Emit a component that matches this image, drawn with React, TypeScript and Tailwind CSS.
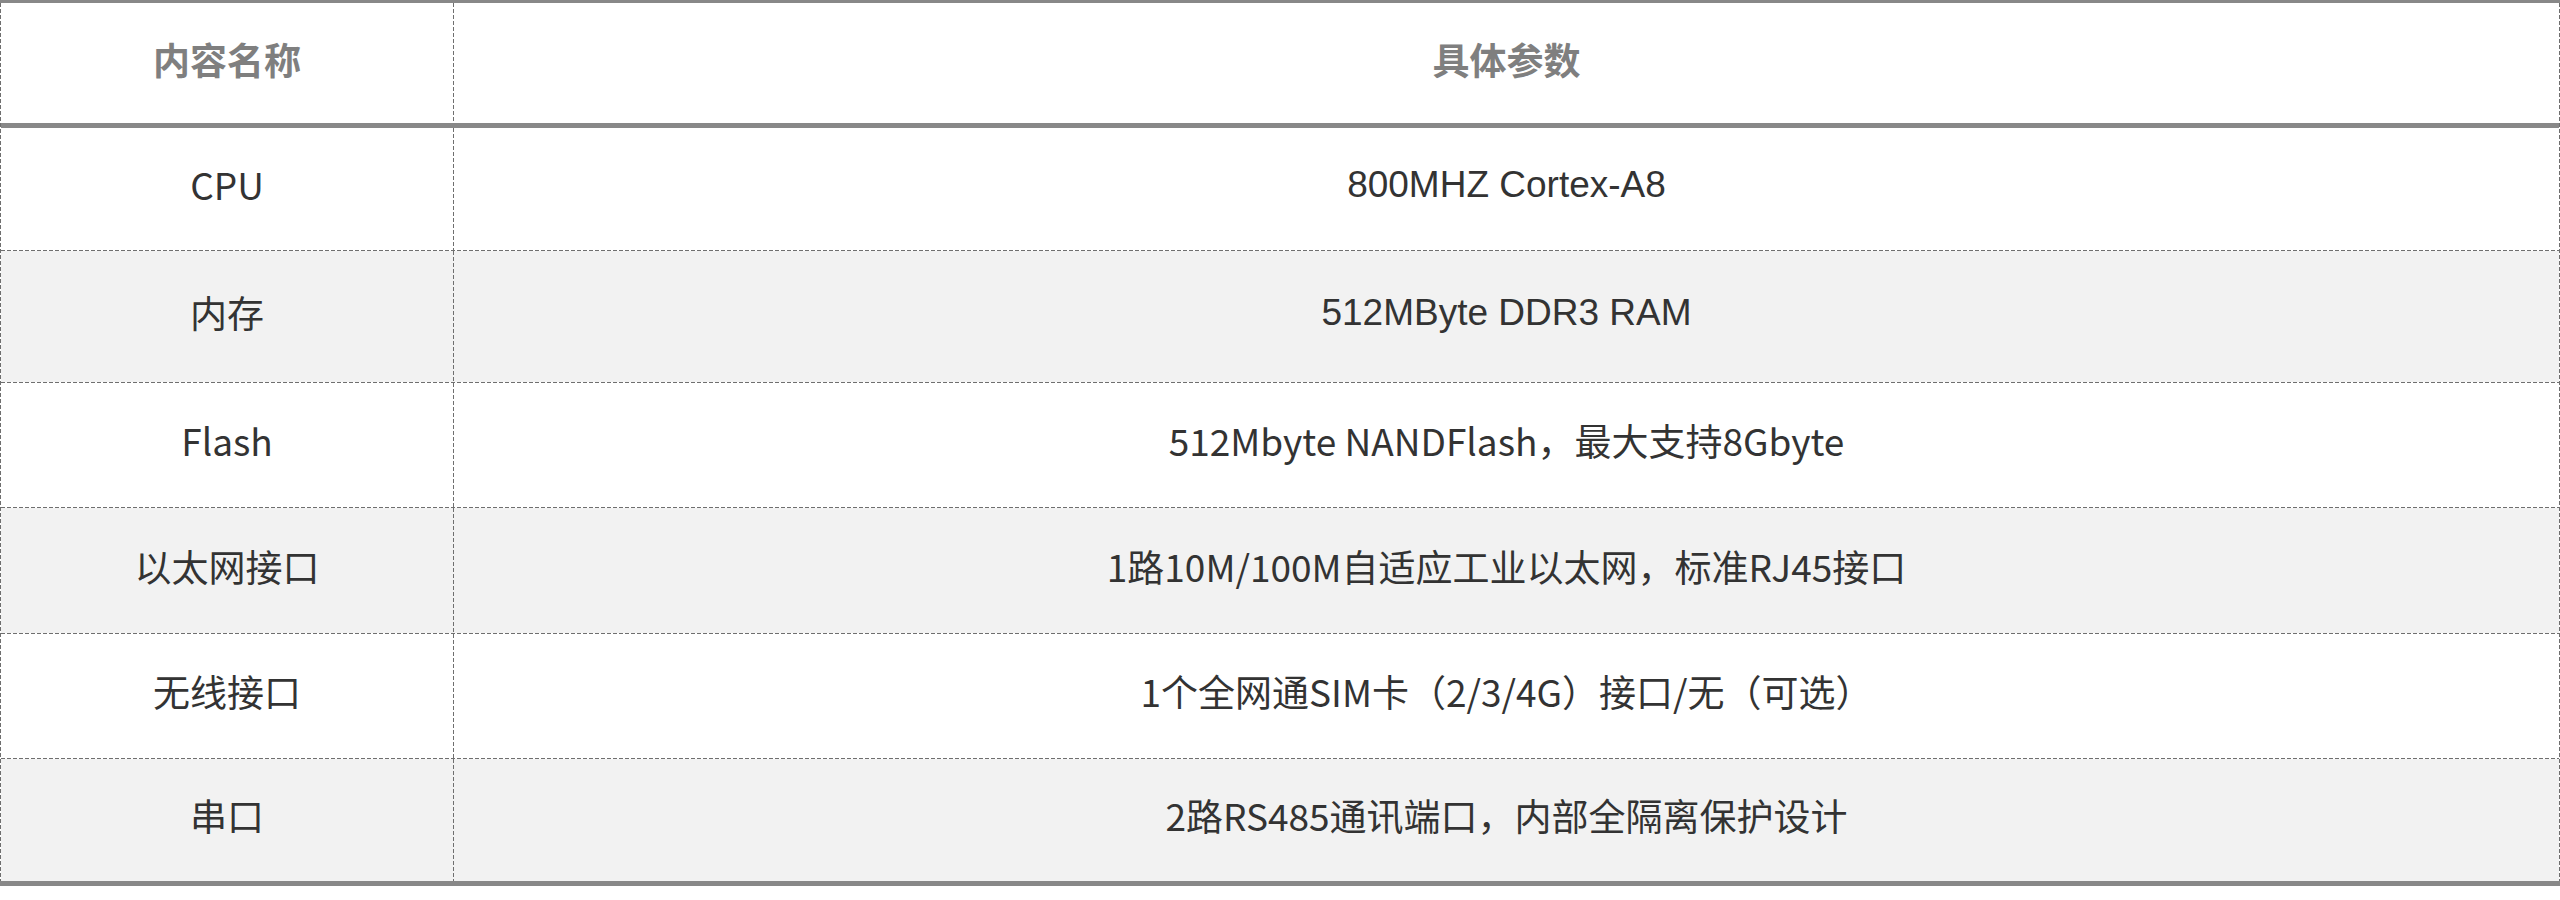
import React from 'react';

interface SpecRow {
  name: string;
  value: string;
  h: string;
  latin?: boolean;
}

const rows: SpecRow[] = [
  { name: 'CPU', value: '800MHZ Cortex-A8', h: 'h-[122px]', latin: true },
  { name: '内存', value: '512MByte DDR3 RAM', h: 'h-[131px]', latin: true },
  { name: 'Flash', value: '512Mbyte NANDFlash，最大支持8Gbyte', h: 'h-[124px]' },
  { name: '以太网接口', value: '1路10M/100M自适应工业以太网，标准RJ45接口', h: 'h-[125px]' },
  { name: '无线接口', value: '1个全网通SIM卡（2/3/4G）接口/无（可选）', h: 'h-[124px]' },
  { name: '串口', value: '2路RS485通讯端口，内部全隔离保护设计', h: 'h-[122px]' },
];

const cjk = "font-['Noto_Sans_CJK_SC',sans-serif]";
const arial = "font-['Liberation_Sans','Noto_Sans_CJK_SC',sans-serif]";

// 4px dash / 2px gap, like the original table's dashed rules
const VDash = () => (
  <div className="w-px shrink-0 self-stretch bg-[repeating-linear-gradient(to_bottom,#6f6f6f_0_4px,transparent_4px_6px)]" />
);
const HDash = () => (
  <div className="h-px w-full bg-[repeating-linear-gradient(to_right,#6f6f6f_0_4px,transparent_4px_6px)]" />
);

export default function App() {
  return (
    <div className="w-[2560px] bg-white">
      <div className="border-t-[3px] border-b-[5px] border-solid border-[#888]">
        <div className="flex">
          <VDash />
          <div className="flex-1 flex flex-col">
            {/* header */}
            <div className="flex h-[120px]">
              <div
                className={`w-[452px] flex items-center justify-center pb-[6px] text-[37px] font-bold text-[#7f7f7f] ${cjk}`}
              >
                内容名称
              </div>
              <VDash />
              <div
                className={`flex-1 flex items-center justify-center pb-[6px] text-[37px] font-bold text-[#7f7f7f] ${cjk}`}
              >
                具体参数
              </div>
            </div>
            <div className="h-[5px] bg-[#888]" />

            {/* rows */}
            {rows.map((row, i) => (
              <React.Fragment key={row.name}>
                {i > 0 && <HDash />}
                <div className={`flex ${row.h} ${i % 2 === 1 ? 'bg-[#f2f2f2]' : 'bg-white'}`}>
                  <div
                    className={`w-[452px] flex items-center justify-center pb-[8px] text-[37px] text-[#333] ${cjk}`}
                  >
                    {row.name}
                  </div>
                  <VDash />
                  <div
                    className={`flex-1 flex items-center justify-center pb-[8px] text-[37px] text-[#333] ${
                      row.latin ? arial : cjk
                    }`}
                  >
                    {row.value}
                  </div>
                </div>
              </React.Fragment>
            ))}
          </div>
          <VDash />
        </div>
      </div>
    </div>
  );
}
